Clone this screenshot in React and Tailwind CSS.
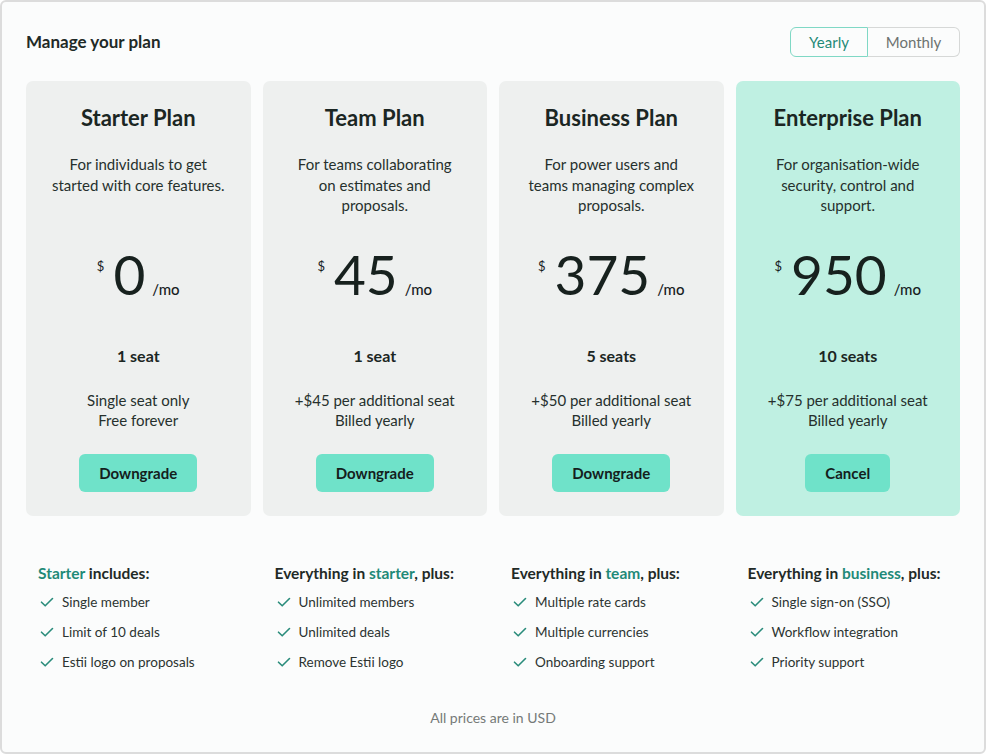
import React from "react";

const plans = [
  {
    name: "Starter Plan",
    desc: ["For individuals to get", "started with core features."],
    price: "0",
    seats: "1 seat",
    details: ["Single seat only", "Free forever"],
    button: "Downgrade",
    highlight: false,
  },
  {
    name: "Team Plan",
    desc: ["For teams collaborating", "on estimates and", "proposals."],
    price: "45",
    seats: "1 seat",
    details: ["+$45 per additional seat", "Billed yearly"],
    button: "Downgrade",
    highlight: false,
  },
  {
    name: "Business Plan",
    desc: ["For power users and", "teams managing complex", "proposals."],
    price: "375",
    seats: "5 seats",
    details: ["+$50 per additional seat", "Billed yearly"],
    button: "Downgrade",
    highlight: false,
  },
  {
    name: "Enterprise Plan",
    desc: ["For organisation-wide", "security, control and", "support."],
    price: "950",
    seats: "10 seats",
    details: ["+$75 per additional seat", "Billed yearly"],
    button: "Cancel",
    highlight: true,
  },
];

const features = [
  { pre: "", key: "Starter", post: " includes:", items: ["Single member", "Limit of 10 deals", "Estii logo on proposals"] },
  { pre: "Everything in ", key: "starter", post: ", plus:", items: ["Unlimited members", "Unlimited deals", "Remove Estii logo"] },
  { pre: "Everything in ", key: "team", post: ", plus:", items: ["Multiple rate cards", "Multiple currencies", "Onboarding support"] },
  { pre: "Everything in ", key: "business", post: ", plus:", items: ["Single sign-on (SSO)", "Workflow integration", "Priority support"] },
];

function Check() {
  return (
    <svg width="14" height="14" viewBox="0 0 14 14" fill="none" className="shrink-0">
      <path d="M1.5 7.2 L5.2 10.8 L12.5 3.5" stroke="#2a8c7b" strokeWidth="1.6" strokeLinecap="round" strokeLinejoin="round" />
    </svg>
  );
}

function Card({ p }) {
  return (
    <div
      className={`flex flex-col items-center rounded-[7px] pt-[22px] pb-[24px] text-center ${
        p.highlight ? "bg-[#bff0e2]" : "bg-[#eef0ef]"
      }`}
    >
      <div className="text-[22px] leading-[30px] font-bold text-[#1b2623]">{p.name}</div>
      <div className="mt-[21px] h-[62px] text-[15px] leading-[20.5px] text-[#26302d]">
        {p.desc.map((d) => (
          <div key={d}>{d}</div>
        ))}
      </div>
      <div className="mt-[31px] flex items-baseline text-[#17211e]">
        <span className="self-start mt-[11px] mr-[1px] text-[13px] leading-[16px]">$</span>
        <span className="ml-[8px] text-[55px] leading-none font-normal">{p.price}</span>
        <span className="ml-[7px] text-[15px] leading-[20px] font-medium">/mo</span>
      </div>
      <div className="mt-[43px] text-[16px] leading-[22px] font-bold text-[#1b2623]">{p.seats}</div>
      <div className="mt-[23px] text-[15px] leading-[20px] text-[#26302d]">
        {p.details.map((d) => (
          <div key={d}>{d}</div>
        ))}
      </div>
      <button className="mt-[24px] h-[38px] px-[20px] rounded-[6px] bg-[#6fe2c9] text-[15px] font-bold text-[#14201c]">
        {p.button}
      </button>
    </div>
  );
}

export default function App() {
  return (
    <div
      className="w-[986px] h-[754px] border-2 border-[#dcdcdc] rounded-[6px] bg-[#fbfcfc] px-[24px] pt-[25px] text-[#1b2623]"
      style={{ fontFamily: "Lato, 'Noto Sans', sans-serif" }}
    >
      <div className="flex h-[30px] items-center justify-between">
        <div className="text-[17px] font-bold text-[#1f2a27]">Manage your plan</div>
        <div className="flex h-[30px] text-[15px]">
          <div className="flex w-[78px] items-center justify-center rounded-l-[6px] border border-[#7fd8c5] text-[#1f8a78]">
            Yearly
          </div>
          <div className="flex w-[92px] items-center justify-center rounded-r-[6px] border border-l-0 border-[#d6d8d7] text-[#6d7270]">
            Monthly
          </div>
        </div>
      </div>

      <div className="mt-[24px] grid grid-cols-4 gap-[12px]">
        {plans.map((p) => (
          <Card key={p.name} p={p} />
        ))}
      </div>

      <div className="mt-[47px] grid grid-cols-4 gap-[12px]">
        {features.map((f) => (
          <div key={f.key} className="pl-[12px]">
            <div className="text-[15.5px] leading-[20px] font-bold text-[#1f2a27]">
              {f.pre}
              <span className="text-[#1f8a78]">{f.key}</span>
              {f.post}
            </div>
            <div className="mt-[9px] flex flex-col gap-[10px]">
              {f.items.map((it) => (
                <div key={it} className="flex h-[20px] items-center gap-[8px] pl-[2px] text-[13.5px] text-[#2c3431]">
                  <Check />
                  <span>{it}</span>
                </div>
              ))}
            </div>
          </div>
        ))}
      </div>

      <div className="mt-[35px] text-center text-[14px] text-[#757a78]">All prices are in USD</div>
    </div>
  );
}
